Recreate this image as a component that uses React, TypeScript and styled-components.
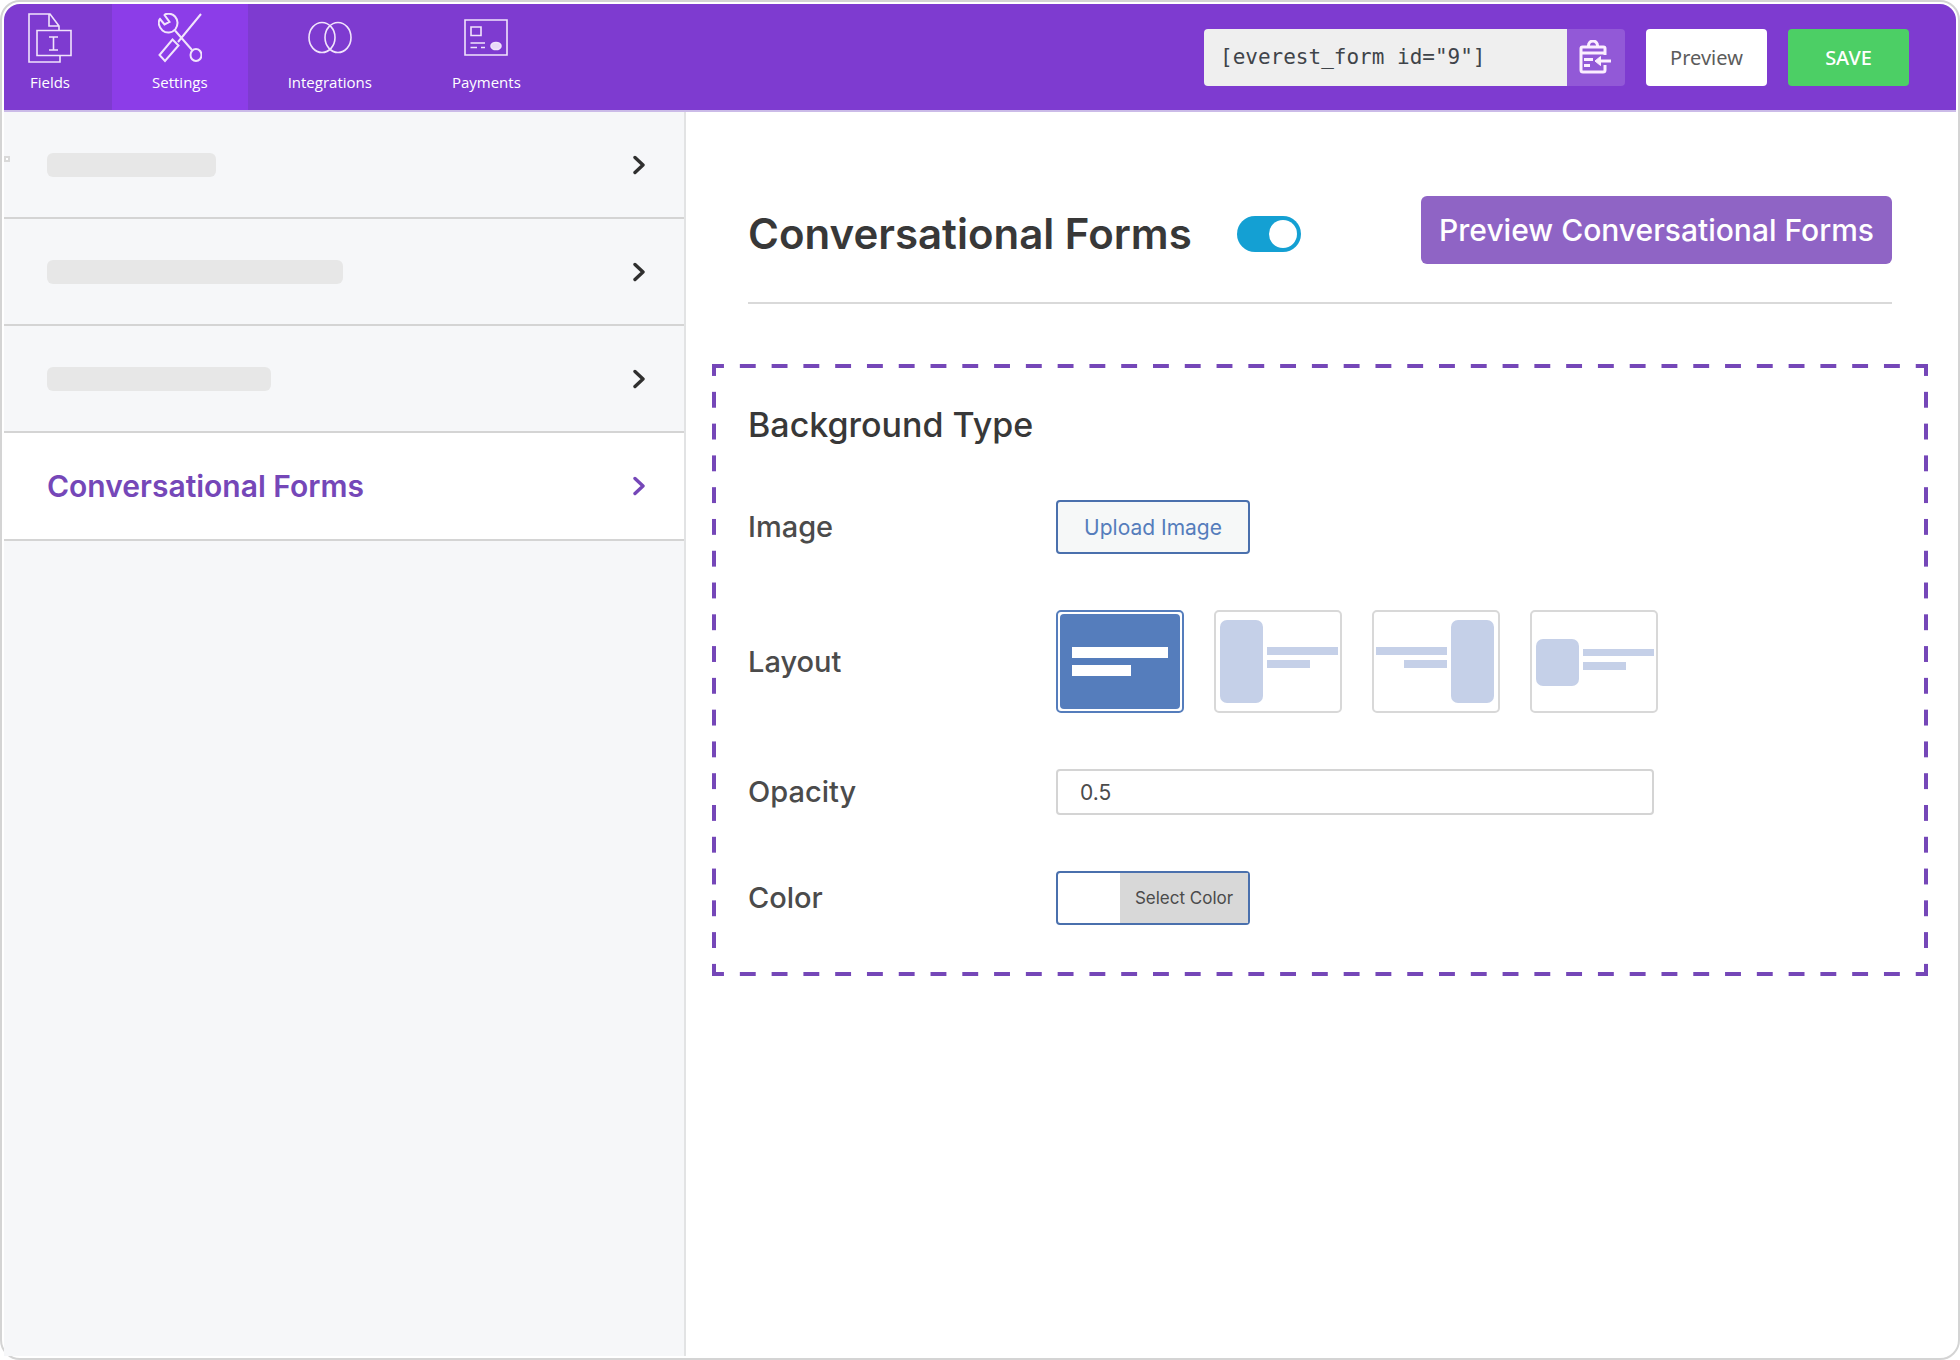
import React, { useState } from "react";
import styled, { createGlobalStyle, css } from "styled-components";

const violet = "#7e3bd0";
const accent = "#7547b8";
const blue = "#557dbc";
const line = "#d4d4d4";
const ink = "#383838";

const GlobalStyle = createGlobalStyle`
  *, *::before, *::after { box-sizing: border-box; }
  body { margin: 0; background: #fff; font-family: Inter, "Noto Sans", sans-serif; color: ${ink}; }
  button, input { font: inherit; margin: 0; }
  h1, h2, ul { margin: 0; padding: 0; }
`;

const Frame = styled.div`
  display: flex;
  flex-direction: column;
  min-height: 100vh;
  padding: 2px;
  border: 2px solid ${line};
  border-radius: 20px;
  background: #fff;
`;

const TopBar = styled.header`
  display: flex;
  justify-content: space-between;
  height: 108px;
  padding-right: 47px;
  background: ${violet};
  border-bottom: 2px solid #cbbbe8;
  border-radius: 16px 16px 0 0;
  overflow: hidden;
`;

const Tabs = styled.nav`
  display: flex;
`;

const Tab = styled.button<{ $active?: boolean; $first?: boolean }>`
  display: flex;
  flex-direction: column;
  align-items: center;
  gap: 7px;
  padding: 9px 40px 0 ${(p) => (p.$first ? 24 : 40)}px;
  border: 0;
  background: ${(p) => (p.$active ? "#8c3de8" : "transparent")};
  color: #fff;
  font-family: "Open Sans", "Noto Sans", sans-serif;
  font-size: 15px;
  line-height: 24px;
  cursor: pointer;
`;

const TabIcon = styled.svg`
  width: 44px;
  height: 50px;
  fill: none;
  stroke: #f1e4fc;
  stroke-width: 1.6;
`;

const Actions = styled.div`
  display: flex;
  align-items: center;
  gap: 21px;
`;

const Shortcode = styled.div`
  display: flex;
  height: 57px;
`;

const ShortcodeInput = styled.input`
  width: 363px;
  padding: 0 16px;
  border: 0;
  border-radius: 4px 0 0 4px;
  background: #efefef;
  color: #3f444a;
  font-family: "DejaVu Sans Mono", monospace;
  font-size: 21px;
`;

const CopyButton = styled.button`
  display: grid;
  place-items: center;
  width: 58px;
  padding: 0;
  border: 0;
  border-radius: 0 4px 4px 0;
  background: #9259d7;
  cursor: pointer;
`;

const BarButton = styled.button<{ $primary?: boolean }>`
  width: 121px;
  height: 57px;
  padding: 0;
  border: 0;
  border-radius: 4px;
  background: ${(p) => (p.$primary ? "#4ccf65" : "#fff")};
  color: ${(p) => (p.$primary ? "#fff" : "#5c5c5c")};
  font-family: "Noto Sans", sans-serif;
  font-size: 20px;
  font-weight: ${(p) => (p.$primary ? 500 : 400)};
  cursor: pointer;
`;

const Body = styled.div`
  display: flex;
  flex: 1;
`;

const Sidebar = styled.aside`
  flex: none;
  width: 682px;
  background: #f6f7f9;
  border-right: 2px solid #e2e3e4;
`;

const MenuList = styled.ul`
  list-style: none;
`;

const MenuItem = styled.li`
  position: relative;
`;

const MenuLink = styled.a<{ $active?: boolean }>`
  display: flex;
  align-items: center;
  justify-content: space-between;
  height: ${(p) => (p.$active ? 108 : 107)}px;
  padding: 0 39px 0 43px;
  border-bottom: 2px solid ${line};
  background: ${(p) => (p.$active ? "#fff" : "transparent")};
  color: ${(p) => (p.$active ? accent : "#2f2f2f")};
  font-size: 30px;
  font-weight: 600;
  text-decoration: none;
`;

const Placeholder = styled.span<{ $width: number }>`
  width: ${(p) => p.$width}px;
  height: 24px;
  border-radius: 6px;
  background: #e7e7e7;
`;

const Marker = styled.span`
  position: absolute;
  top: 44px;
  left: 0;
  width: 6px;
  height: 6px;
  border: 2px solid #d9d9d9;
  background: #fff;
`;

const Chevron = styled.svg`
  width: 12px;
  height: 20px;
  fill: none;
  stroke: currentColor;
  stroke-width: 3.4;
  stroke-linecap: round;
  stroke-linejoin: round;
`;

const Main = styled.main`
  flex: 1;
  min-width: 0;
  padding: 84px 28px 40px 26px;
`;

const TitleRow = styled.div`
  display: flex;
  align-items: center;
  margin: 0 36px;
  padding-bottom: 30px;
  border-bottom: 2px solid #d9d9d9;
`;

const Title = styled.h1`
  font-size: 42px;
  line-height: 68px;
  font-weight: 600;
`;

const Switch = styled.input`
  appearance: none;
  width: 64px;
  height: 36px;
  margin-left: 45px;
  padding: 4px;
  border-radius: 18px;
  background: #c4c4c4;
  cursor: pointer;

  &::before {
    content: "";
    display: block;
    width: 28px;
    height: 28px;
    border-radius: 50%;
    background: #fff;
  }

  &:checked {
    background: #14a0d3;
  }

  &:checked::before {
    margin-left: auto;
  }
`;

const PreviewForms = styled.button`
  height: 68px;
  margin: 0 0 8px auto;
  padding: 0 18px;
  border: 0;
  border-radius: 6px;
  background: #8f64c5;
  color: #fff;
  font-size: 30px;
  font-weight: 500;
  cursor: pointer;
`;

const dash = (dir: string) =>
  `linear-gradient(${dir}, ${accent} 25%, transparent 25% 75%, ${accent} 75%)`;

const Panel = styled.section`
  margin-top: 60px;
  padding: 35px 32px 47px;
  border: 4px solid transparent;
  background-image: ${dash("90deg")}, ${dash("90deg")}, ${dash("180deg")}, ${dash("180deg")};
  background-size: 32px 4px, 32px 4px, 4px 32px, 4px 32px;
  background-repeat: round no-repeat, round no-repeat, no-repeat round, no-repeat round;
  background-position: 0 -4px, 0 calc(100% + 4px), -4px 0, calc(100% + 4px) 0;
  background-origin: padding-box;
  background-clip: border-box;
`;

const PanelTitle = styled.h2`
  margin-bottom: 53px;
  font-size: 34px;
  line-height: 44px;
  font-weight: 500;
`;

const Fields = styled.div`
  display: flex;
  flex-direction: column;
  gap: 56px;
`;

const Row = styled.div`
  display: grid;
  grid-template-columns: 308px minmax(0, 598px);
  align-items: center;
`;

const labelText = css`
  color: #4b4b4b;
  font-size: 29px;
  line-height: 36px;
  font-weight: 500;
`;

const Label = styled.label`
  ${labelText}
`;

const GroupLabel = styled.span`
  ${labelText}
`;

const outlined = css`
  width: 194px;
  height: 54px;
  padding: 0;
  border: 2px solid #4a70ad;
  border-radius: 4px;
  cursor: pointer;
`;

const UploadButton = styled.button`
  ${outlined}
  background: #f6f8f8;
  color: ${blue};
  font-size: 21px;
`;

const Layouts = styled.div`
  display: flex;
  gap: 30px;
`;

const LayoutCard = styled.label`
  display: block;
  flex: none;
  width: 128px;
  height: 103px;
  border: 2px solid #d8d8d8;
  border-radius: 5px;
  overflow: hidden;
  cursor: pointer;

  &:has(input:checked) {
    border-color: ${blue};
  }
`;

const HiddenRadio = styled.input`
  position: absolute;
  opacity: 0;
  pointer-events: none;
`;

const Thumb = styled.svg`
  display: block;
  width: 124px;
  height: 99px;
  fill: #c5d0e8;
`;

const TextInput = styled.input`
  width: 100%;
  height: 46px;
  padding: 0 22px;
  border: 2px solid #d4d4d4;
  border-radius: 4px;
  background: #fff;
  color: #4b4b4b;
  font-size: 21px;
`;

const ColorButton = styled.button`
  ${outlined}
  display: flex;
  background: #fff;
  color: #4b4b4b;
  font-size: 17px;
  line-height: 50px;
`;

const Swatch = styled.span`
  width: 62px;
`;

const ColorText = styled.span`
  flex: 1;
  background: #d8d8d8;
`;

const tabs = [
  {
    name: "Fields",
    icon: (
      <>
        <path d="M31 17V13L22 1H1V49H32V43M21 1V13H31" />
        <path d="M9 17.500H43V42.500H9ZM21 24H30M25.500 24V37M21 37H30" />
      </>
    ),
  },
  {
    name: "Settings",
    icon: (
      <>
        <path d="M2 6L6.500 11.500L11.500 9L6.500 2C8 0 14 0 17 3.500C20 7 20 12 17.500 16C14 20.500 8 20.500 4.500 17.500C1 14.500 -0.500 9 2 6Z" strokeWidth="2" />
        <path d="M17 17.500L34 37M43 1L20 29M14.500 26.500L20.500 32.500L7 48L1.500 42Z" strokeWidth="2" />
        <ellipse cx="38" cy="42" rx="5.500" ry="6" strokeWidth="2" />
      </>
    ),
  },
  {
    name: "Integrations",
    icon: (
      <>
        <ellipse cx="14" cy="24.500" rx="13" ry="15" />
        <ellipse cx="30" cy="24.500" rx="13" ry="15" />
      </>
    ),
  },
  {
    name: "Payments",
    icon: (
      <>
        <path d="M1 7H43V42H1ZM7 14H17V22.500H7ZM6.500 30H21M6.500 34.500H13M17 34.500H21" />
        <ellipse cx="32" cy="33" rx="5" ry="3.500" fill="#e9d9f8" />
      </>
    ),
  },
];

const thumbs = [
  {
    name: "Full background",
    art: (
      <>
        <rect x="2" y="2" width="120" height="95" rx="4" fill={blue} />
        <rect x="14" y="35" width="96" height="11" fill="#fff" />
        <rect x="14" y="53" width="59" height="11" fill="#fff" />
      </>
    ),
  },
  {
    name: "Image left",
    art: (
      <>
        <rect x="4" y="8" width="43" height="83" rx="7" />
        <rect x="51" y="35" width="71" height="8" />
        <rect x="51" y="48" width="43" height="8" />
      </>
    ),
  },
  {
    name: "Image right",
    art: (
      <>
        <rect x="77" y="8" width="43" height="83" rx="7" />
        <rect x="2" y="35" width="71" height="8" />
        <rect x="30" y="48" width="43" height="8" />
      </>
    ),
  },
  {
    name: "Inline image",
    art: (
      <>
        <rect x="4" y="27" width="43" height="47" rx="7" />
        <rect x="51" y="37" width="71" height="7" />
        <rect x="51" y="50" width="43" height="8" />
      </>
    ),
  },
];

const ChevronRight = () => (
  <Chevron viewBox="0 0 12 20" aria-hidden="true">
    <path d="M2 2.500L10 10L2 17.500" />
  </Chevron>
);

export default function App() {
  const [tab, setTab] = useState("Settings");
  const [enabled, setEnabled] = useState(true);
  const [layout, setLayout] = useState(thumbs[0].name);
  const [opacity, setOpacity] = useState("0.5");

  return (
    <>
      <GlobalStyle />
      <Frame>
        <TopBar>
          <Tabs>
            {tabs.map((t, i) => (
              <Tab key={t.name} type="button" $first={i === 0} $active={t.name === tab} onClick={() => setTab(t.name)}>
                <TabIcon viewBox="0 0 44 50" aria-hidden="true">{t.icon}</TabIcon>
                {t.name}
              </Tab>
            ))}
          </Tabs>
          <Actions>
            <Shortcode>
              <ShortcodeInput aria-label="Shortcode" readOnly value={'[everest_form id="9"]'} />
              <CopyButton type="button" aria-label="Copy shortcode">
                <svg width="34" height="34" viewBox="2 0 34 34" fill="none" stroke="#fbeeff" strokeWidth="3" strokeLinejoin="round" aria-hidden="true">
                  <path d="M28 15V8.500Q28 7 26.500 7H5.500Q4 7 4 8.500V30Q4 32 6 32H26Q28 32 28 30V25" />
                  <path d="M11.500 7V5.500A4 4 0 0 1 20.500 5.500V7M4 13H28M7 19.500H16M7 25.500H13M34 21H21" />
                  <path d="M23.500 16.500L18 21L23.500 25.500Z" fill="#fbeeff" strokeWidth="1" />
                </svg>
              </CopyButton>
            </Shortcode>
            <BarButton type="button">Preview</BarButton>
            <BarButton type="button" $primary>SAVE</BarButton>
          </Actions>
        </TopBar>
        <Body>
          <Sidebar>
            <MenuList>
              {[169, 296, 224].map((width, i) => (
                <MenuItem key={width}>
                  {i === 0 && <Marker />}
                  <MenuLink href="#">
                    <Placeholder $width={width} />
                    <ChevronRight />
                  </MenuLink>
                </MenuItem>
              ))}
              <MenuItem>
                <MenuLink href="#" $active>
                  Conversational Forms
                  <ChevronRight />
                </MenuLink>
              </MenuItem>
            </MenuList>
          </Sidebar>
          <Main>
            <TitleRow>
              <Title>Conversational Forms</Title>
              <Switch
                type="checkbox"
                role="switch"
                aria-label="Enable conversational forms"
                checked={enabled}
                onChange={(e) => setEnabled(e.target.checked)}
              />
              <PreviewForms type="button">Preview Conversational Forms</PreviewForms>
            </TitleRow>
            <Panel>
              <PanelTitle>Background Type</PanelTitle>
              <Fields>
                <Row>
                  <Label htmlFor="image">Image</Label>
                  <UploadButton id="image" type="button">Upload Image</UploadButton>
                </Row>
                <Row role="radiogroup" aria-labelledby="layout-label">
                  <GroupLabel id="layout-label">Layout</GroupLabel>
                  <Layouts>
                    {thumbs.map((t) => (
                      <LayoutCard key={t.name}>
                        <HiddenRadio
                          type="radio"
                          name="layout"
                          aria-label={t.name}
                          checked={layout === t.name}
                          onChange={() => setLayout(t.name)}
                        />
                        <Thumb viewBox="0 0 124 99" aria-hidden="true">{t.art}</Thumb>
                      </LayoutCard>
                    ))}
                  </Layouts>
                </Row>
                <Row>
                  <Label htmlFor="opacity">Opacity</Label>
                  <TextInput id="opacity" value={opacity} onChange={(e) => setOpacity(e.target.value)} />
                </Row>
                <Row>
                  <Label htmlFor="color">Color</Label>
                  <ColorButton id="color" type="button">
                    <Swatch />
                    <ColorText>Select Color</ColorText>
                  </ColorButton>
                </Row>
              </Fields>
            </Panel>
          </Main>
        </Body>
      </Frame>
    </>
  );
}
